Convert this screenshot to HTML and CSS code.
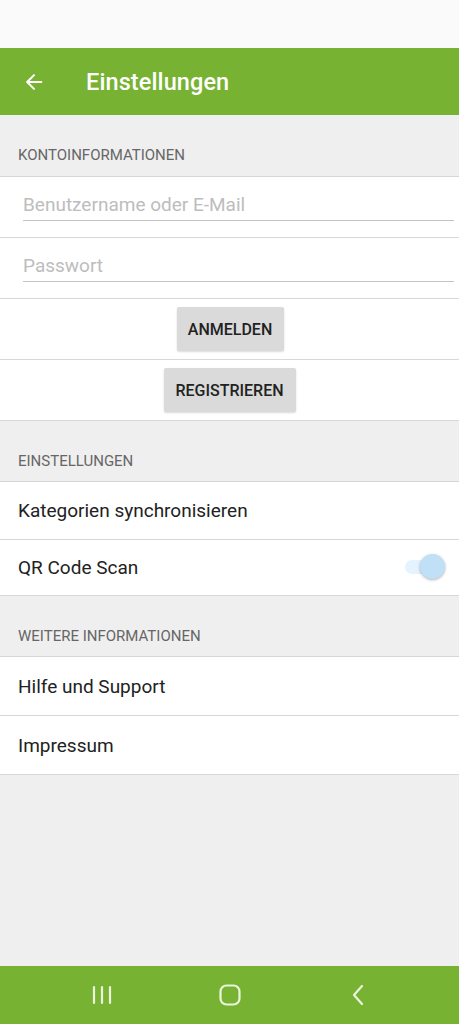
FILE: index.html
```html
<!DOCTYPE html>
<html lang="de">
<head>
<meta charset="utf-8">
<link rel="stylesheet" href="styles.css">
</head>
<body>
<div class="screen">
  <div class="statusbar"></div>
  <header class="toolbar">
    <svg class="back" width="22" height="22" viewBox="0 0 24 24"><path d="M20 12H5M12 4.5L4.5 12 12 19.5" fill="none" stroke="#fff" stroke-width="2.2" stroke-linecap="round" stroke-linejoin="round"/></svg>
    <h1 class="title">Einstellungen</h1>
  </header>
  <main class="content">
    <div class="section-head">KONTOINFORMATIONEN</div>
    <div class="group">
      <div class="row input-row"><div class="field">Benutzername oder E-Mail</div></div>
      <div class="row input-row"><div class="field">Passwort</div></div>
      <div class="row btn-row"><button class="btn btn-login">ANMELDEN</button></div>
      <div class="row btn-row"><button class="btn btn-reg">REGISTRIEREN</button></div>
    </div>
    <div class="section-head">EINSTELLUNGEN</div>
    <div class="group">
      <div class="row item">Kategorien synchronisieren</div>
      <div class="row item item-short">QR Code Scan
        <span class="toggle"><span class="track"></span><span class="thumb"></span></span>
      </div>
    </div>
    <div class="section-head">WEITERE INFORMATIONEN</div>
    <div class="group group-info">
      <div class="row item">Hilfe und Support</div>
      <div class="row item">Impressum</div>
    </div>
  </main>
  <nav class="navbar">
    <svg width="22" height="20" viewBox="0 0 22 20"><path d="M3 2v16M11 2v16M19 2v16" stroke="#eaf5dc" stroke-width="2.2" stroke-linecap="round"/></svg>
    <svg width="24" height="24" viewBox="0 0 24 24"><rect x="2.5" y="2.5" width="19" height="19" rx="6" fill="none" stroke="#eaf5dc" stroke-width="2.2"/></svg>
    <svg width="16" height="22" viewBox="0 0 16 22"><path d="M12 2L4 11l8 9" fill="none" stroke="#eaf5dc" stroke-width="2.2" stroke-linecap="round" stroke-linejoin="round"/></svg>
  </nav>
</div>
</body>
</html>
```
FILE: styles.css
```css
* { box-sizing: border-box; }
html, body { margin: 0; padding: 0; }
body {
  font-family: Roboto, "Liberation Sans", sans-serif;
  background: #efefef;
}
.screen {
  width: 459px;
  height: 1024px;
  display: flex;
  flex-direction: column;
  background: #efefef;
}
.statusbar {
  height: 48px;
  background: #fafafa;
}
.toolbar {
  height: 67px;
  background: #77b232;
  display: flex;
  align-items: center;
  padding-left: 23px;
}
.back { flex: none; }
.title {
  margin: 0 0 0 41px;
  font-size: 23.5px;
  font-weight: 500;
  color: #fff;
  letter-spacing: 0.1px;
}
.content {
  flex: 1;
  display: flex;
  flex-direction: column;
}
.section-head {
  height: 61px;
  padding: 31px 0 0 18px;
  font-size: 15px;
  color: #666;
  border-bottom: 1px solid #d6d6d6;
}
.content > .section-head:first-child {
  height: 62px;
}
.group {
  background: #fff;
}
.row {
  border-bottom: 1px solid #d8d8d8;
}
.input-row {
  height: 61px;
  padding: 16px 5px 0 23px;
}
.field {
  height: 28px;
  font-size: 19px;
  color: #bdbdbd;
  border-bottom: 1px solid #c4c4c4;
  line-height: 24px;
}
.btn-row {
  height: 61px;
  display: flex;
  justify-content: center;
  align-items: flex-start;
  padding-top: 8px;
}
.btn {
  height: 44px;
  border: none;
  border-radius: 2px;
  background: #d9dad9;
  font-family: Roboto, "Liberation Sans", sans-serif;
  font-size: 16px;
  font-weight: 500;
  color: #222;
  box-shadow: 0 1px 2px rgba(0,0,0,0.15);
  padding: 0;
}
.btn-login { width: 107px; margin-left: 1px; }
.btn-reg { width: 132px; }
.item {
  height: 58px;
  display: flex;
  align-items: center;
  padding-left: 18px;
  font-size: 19px;
  color: #222;
  position: relative;
}
.item-short { height: 56px; }
.group-info .item { height: 59px; }
.toggle {
  position: absolute;
  right: 14px;
  top: 13px;
  width: 42px;
  height: 28px;
}
.track {
  position: absolute;
  left: 2px;
  top: 7px;
  width: 34px;
  height: 14px;
  border-radius: 7px;
  background: #e4f3fd;
}
.thumb {
  position: absolute;
  right: 0;
  top: 1px;
  width: 25px;
  height: 25px;
  border-radius: 50%;
  background: #bfe0f7;
  box-shadow: 0 1px 3px rgba(0,0,0,0.3);
}
.navbar {
  height: 58px;
  background: #77b232;
  display: grid;
  grid-template-columns: repeat(3, 128px);
  justify-items: center;
  align-items: center;
  padding-left: 38px;
}
```
